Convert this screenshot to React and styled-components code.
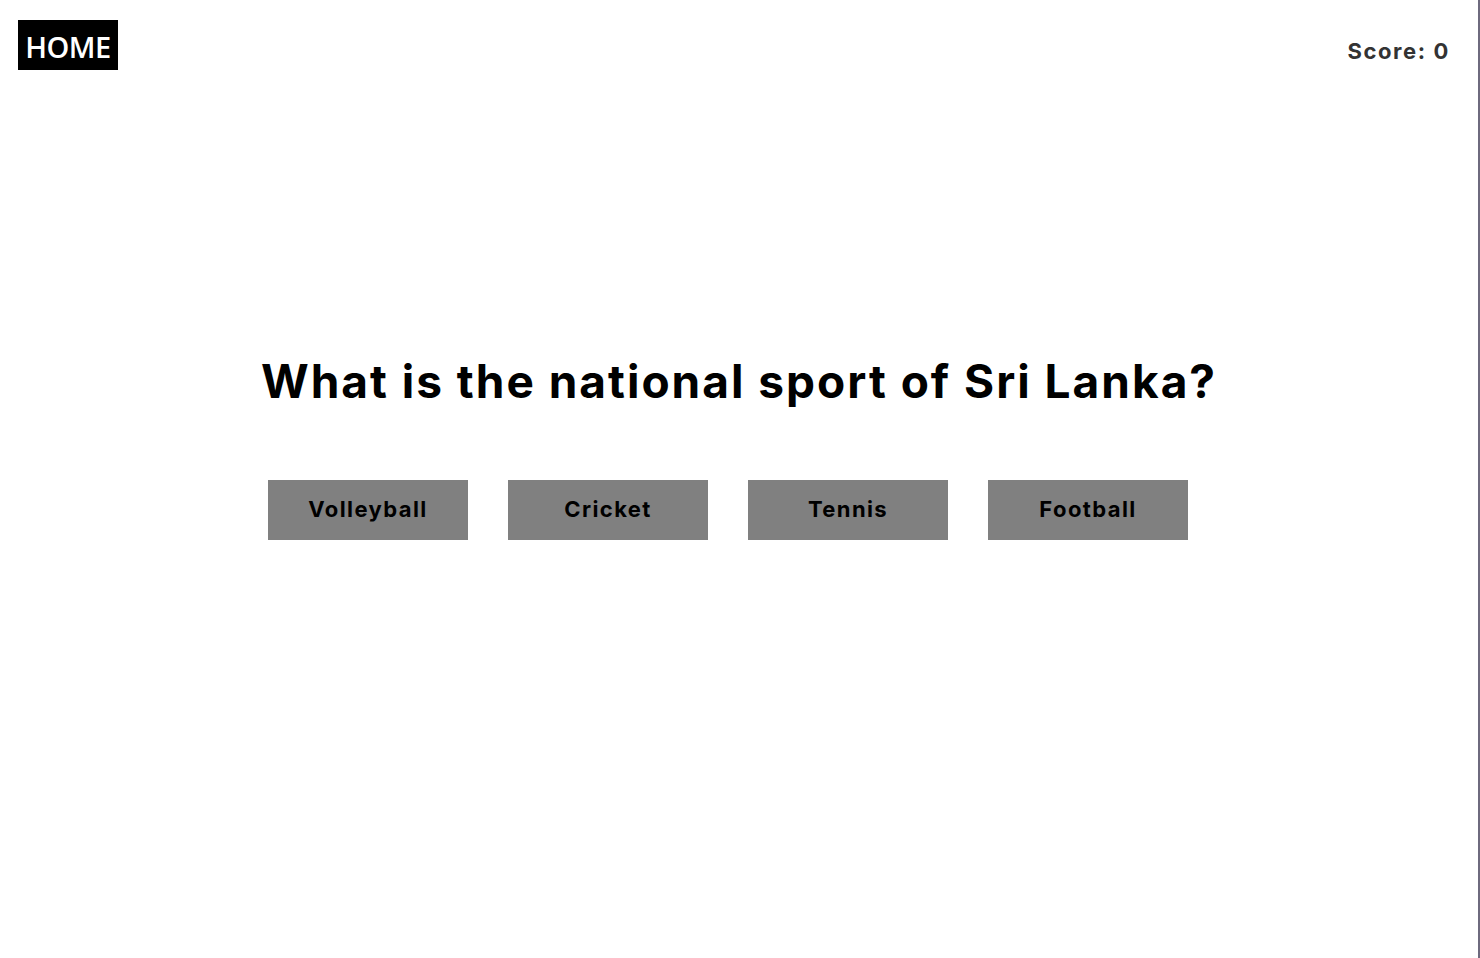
import React from "react";
import styled, { createGlobalStyle } from "styled-components";

const Global = createGlobalStyle`
  html, body { margin: 0; padding: 0; background: #fff; }
  body { font-family: Inter, "Liberation Sans", sans-serif; }
`;

const Page = styled.div`
  width: 1480px;
  height: 958px;
  box-sizing: border-box;
  display: flex;
  flex-direction: column;
  border-right: 2px solid #6e6a7e;
`;

const TopBar = styled.header`
  display: flex;
  justify-content: space-between;
  align-items: flex-start;
  padding: 20px 28px 0 18px;
`;

const HomeButton = styled.a`
  display: flex;
  align-items: center;
  justify-content: center;
  width: 100px;
  height: 50px;
  padding-top: 3px;
  box-sizing: border-box;
  background: #000;
  color: #fff;
  font-family: "Open Sans", sans-serif;
  font-weight: 600;
  font-size: 29px;
  letter-spacing: -0.5px;
  text-decoration: none;
`;

const Score = styled.div`
  margin-top: 18px;
  font-family: Inter, sans-serif;
  font-weight: 700;
  font-size: 22px;
  letter-spacing: 1.6px;
  color: #333;
`;

const Main = styled.main`
  display: flex;
  flex-direction: column;
  align-items: center;
  padding-top: 283px;
`;

const Question = styled.h1`
  margin: 0;
  font-family: Inter, sans-serif;
  font-weight: 700;
  font-size: 46px;
  letter-spacing: 2px;
  color: #000;
  line-height: 56px;
`;

const Options = styled.div`
  display: flex;
  gap: 40px;
  margin-top: 71px;
  margin-right: 22px;
`;

const Option = styled.button`
  width: 200px;
  height: 60px;
  padding: 0 0 2px;
  border: none;
  background: #808080;
  color: #000;
  font-family: Inter, sans-serif;
  font-weight: 700;
  font-size: 22px;
  letter-spacing: 1.4px;
  cursor: pointer;
`;

const options = ["Volleyball", "Cricket", "Tennis", "Football"];

export default function App() {
  return (
    <>
      <Global />
      <Page>
        <TopBar>
          <HomeButton href="#">HOME</HomeButton>
          <Score>Score: 0</Score>
        </TopBar>
        <Main>
          <Question>What is the national sport of Sri Lanka?</Question>
          <Options>
            {options.map((o) => (
              <Option key={o}>{o}</Option>
            ))}
          </Options>
        </Main>
      </Page>
    </>
  );
}
